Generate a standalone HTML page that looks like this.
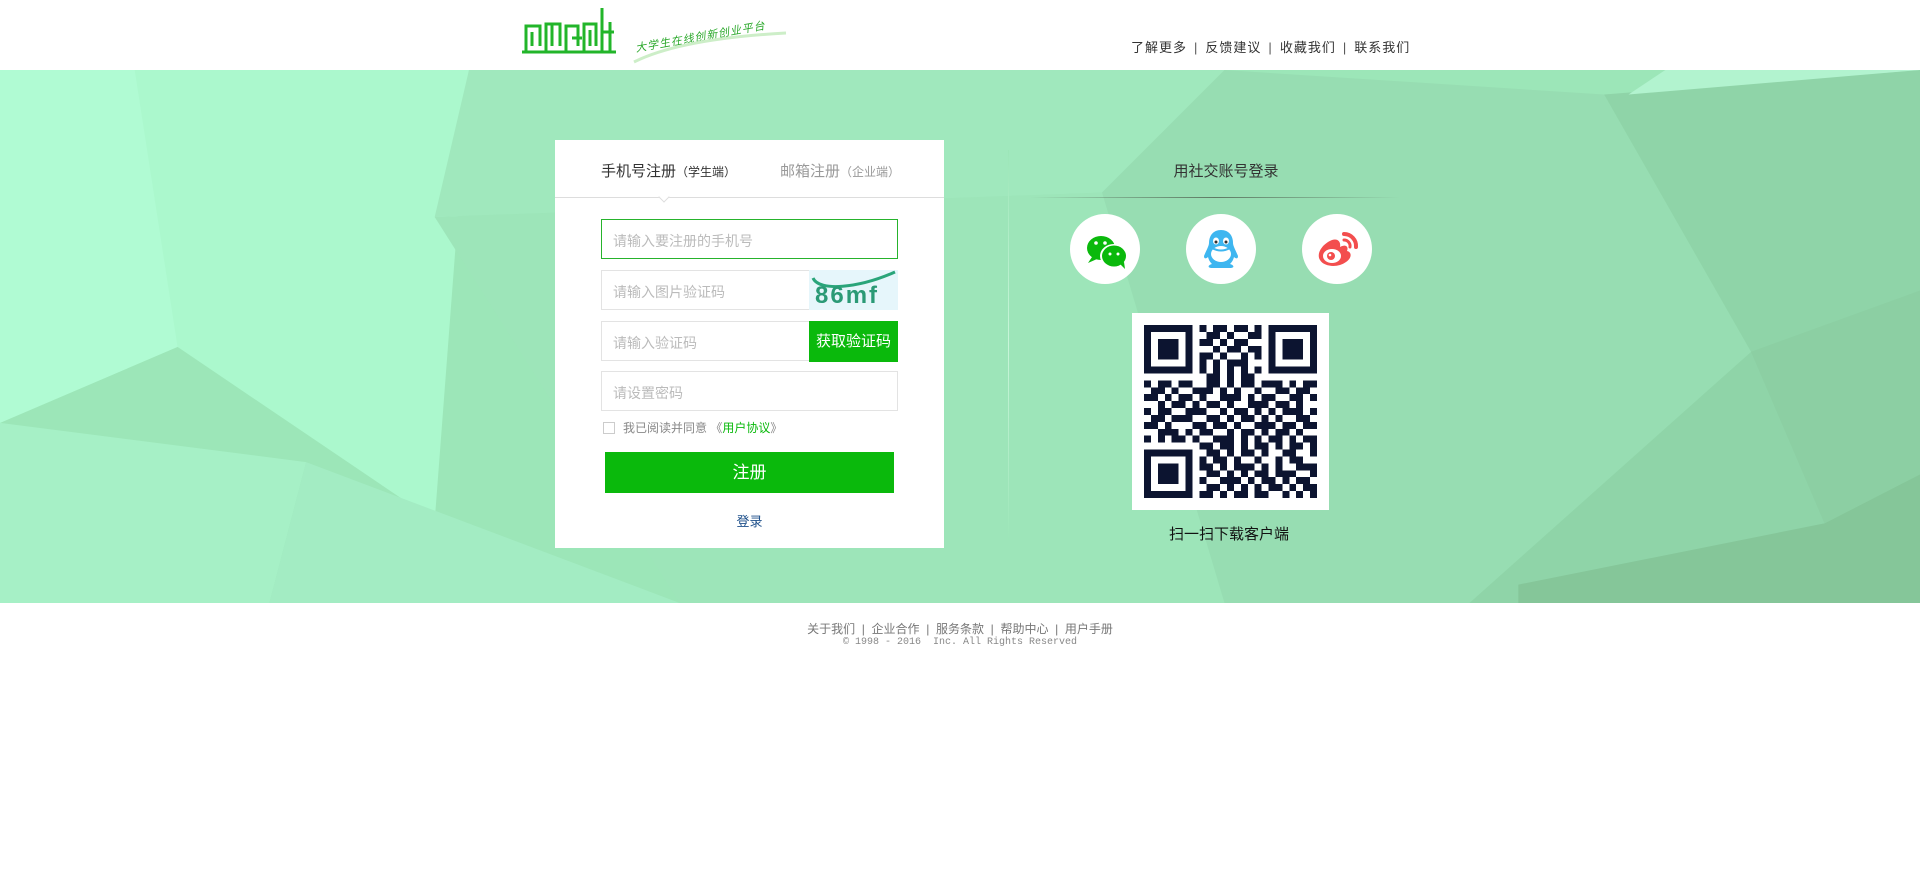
<!DOCTYPE html>
<html><head><meta charset="utf-8"><style>
*{margin:0;padding:0;box-sizing:border-box}
body{width:1920px;height:891px;background:#fff;font-family:"Liberation Sans","Noto Sans CJK SC",sans-serif;position:relative;overflow:hidden}
.abs{position:absolute}
.nav{left:1131px;top:37px;font-size:13px;color:#333;letter-spacing:1px}
.nav span{margin:0 7px;color:#555}
.band{left:0;top:70px;width:1920px;height:533px;background:#9ce6b8}
.card{left:555px;top:140px;width:389px;height:408px;background:#fff}
.tab{position:absolute;top:20px;font-size:15px}
.inp{position:absolute;left:46px;width:297px;height:40px;border:1px solid #e3e3e3;font-size:14px;color:#bbb;padding:11px 0 0 11px;background:#fff}
.foot{left:0;width:1920px;text-align:center;color:#777}
</style></head><body>
<div class="abs" style="left:520px;top:8px;width:98px;height:44px;">
<svg width="98" height="46" viewBox="0 0 98 46"><g fill="none" stroke="#22b52a" stroke-width="3">
<path d="M2 44h94M6 44V18h14v20M12 38V24M26 44V16h14v22M32 16v22M46 44V18h12v20M52 30h10M64 44V16h12v22M70 38V22M82 44V0M82 24h12M90 14v30"/></g></svg></div>
<div class="abs" style="left:634px;top:40px;font-size:11px;color:#2aa82a;font-style:italic;transform:rotate(-10deg);transform-origin:left top;letter-spacing:1px">大学生在线创新创业平台</div>
<svg class="abs" style="left:630px;top:30px" width="160" height="34"><path d="M4 32C40 14 100 6 156 3" stroke="#cdeec8" stroke-width="3" fill="none"/></svg>
<div class="abs nav">了解更多<span>|</span>反馈建议<span>|</span>收藏我们<span>|</span>联系我们</div>

<div class="abs band">
<svg width="1920" height="533" viewBox="0 0 1568 435" preserveAspectRatio="none">
<polygon points="0,0 383,0 355,368 145,226 0,288" fill="#abf8cd"/>
<polygon points="0,0 110,0 145,226 0,288" fill="#b0fbd3"/>
<polygon points="383,0 1000,0 900,100 355,120" fill="#a0e8bd"/>
<polygon points="355,120 900,100 1000,435 555,435" fill="#9de5b9"/>
<polygon points="0,288 250,320 220,435 0,435" fill="#a6f0c6"/>
<polygon points="250,320 555,435 220,435" fill="#a3ecc3"/>
<polygon points="1000,0 1310,20 1430,230 1200,435 1000,435 900,100" fill="#97ddb2"/>
<polygon points="1310,20 1568,0 1568,435 1200,435 1430,230" fill="#8fd4a8"/>
<polygon points="1330,20 1360,0 1568,0" fill="#b2f3cf"/>
<polygon points="1240,420 1490,370 1568,330 1568,435 1240,435" fill="#85c699"/>
<polygon points="1430,230 1568,180 1568,330 1490,370" fill="#8ccfa3"/>
</svg>
</div>

<div class="abs card">
<div class="tab" style="left:46px;top:20px;color:#333">手机号注册<span style="font-size:12px">（学生端）</span></div>
<div class="tab" style="left:225px;top:20px;color:#999">邮箱注册<span style="font-size:12px">（企业端）</span></div>
<div style="position:absolute;left:0;top:57px;width:389px;height:1px;background:#ddd"></div>
<div style="position:absolute;left:105px;top:53px;width:8px;height:8px;border-right:1px solid #ddd;border-bottom:1px solid #ddd;background:#fff;transform:rotate(45deg)"></div>
<div class="inp" style="top:79px;border-color:#26b32c">请输入要注册的手机号</div>
<div class="inp" style="top:130px">请输入图片验证码</div>
<div style="position:absolute;left:254px;top:130px;width:89px;height:40px;background:#e6f6fb;overflow:hidden">
<svg width="89" height="40"><path d="M4 8C10 22 50 18 86 2" stroke="#2aa57a" stroke-width="3" fill="none"/><text x="6" y="33" font-family="Liberation Sans" font-weight="bold" font-size="24" fill="#2b9a76" letter-spacing="2">86mf</text></svg></div>
<div class="inp" style="top:181px">请输入验证码</div>
<div style="position:absolute;left:254px;top:181px;width:89px;height:41px;background:#0ab90c;color:#fff;font-size:15px;text-align:center;line-height:41px">获取验证码</div>
<div class="inp" style="top:231px">请设置密码</div>
<div style="position:absolute;left:48px;top:282px;width:12px;height:12px;border:1px solid #ccc"></div>
<div style="position:absolute;left:68px;top:279px;font-size:12px;color:#888">我已阅读并同意 《<span style="color:#0ab90c">用户协议</span>》</div>
<div style="position:absolute;left:50px;top:312px;width:289px;height:41px;background:#0ab90c;color:#fff;font-size:17px;text-align:center;line-height:41px">注册</div>
<div style="position:absolute;left:0;width:389px;top:371px;text-align:center;font-size:13px;color:#1d4f8a">登录</div>
</div>

<div class="abs" style="left:1008px;top:150px;width:1px;height:390px;background:linear-gradient(#9ce6b8,#c8f5d9,#9ce6b8)"></div>
<div class="abs" style="left:1126px;top:160px;width:200px;text-align:center;font-size:15px;color:#333">用社交账号登录</div>
<div class="abs" style="left:1030px;top:197px;width:370px;height:1px;background:linear-gradient(90deg,rgba(80,100,80,0),#5f7a64,rgba(80,100,80,0))"></div>
<div class="abs" style="left:1070px;top:214px;width:70px;height:70px;border-radius:50%;background:#fff">
<svg width="70" height="70"><ellipse cx="31" cy="34" rx="14" ry="12" fill="#0ab90c"/><path d="M22 43l-4 6 9-4z" fill="#0ab90c"/><ellipse cx="44" cy="42" rx="14" ry="12" fill="#fff"/><ellipse cx="44" cy="42" rx="12" ry="10.5" fill="#0ab90c"/><path d="M50 50l5 5-1-7z" fill="#0ab90c"/><circle cx="26" cy="29" r="1.8" fill="#fff"/><circle cx="35" cy="29" r="1.8" fill="#fff"/><circle cx="40" cy="40" r="1.5" fill="#fff"/><circle cx="48" cy="40" r="1.5" fill="#fff"/></svg></div>
<div class="abs" style="left:1186px;top:214px;width:70px;height:70px;border-radius:50%;background:#fff">
<svg width="70" height="70"><path d="M35 16c-8 0-12 6-12 13 0 3-3 8-5 13 0 3 2 3 4 1 1 4 3 6 4 7-4 1-5 4 0 4h18c5 0 4-3 0-4 1-1 3-3 4-7 2 2 4 2 4-1-2-5-5-10-5-13 0-7-4-13-12-13z" fill="#3eb6f0"/><ellipse cx="35" cy="40" rx="10" ry="8" fill="#fff"/><ellipse cx="30" cy="27" rx="3" ry="3.5" fill="#fff"/><ellipse cx="40" cy="27" rx="3" ry="3.5" fill="#fff"/><circle cx="30" cy="28" r="1.5" fill="#333"/><circle cx="40" cy="28" r="1.5" fill="#333"/><path d="M26 34q9 5 18 0" stroke="#3eb6f0" stroke-width="2" fill="none"/></svg></div>
<div class="abs" style="left:1302px;top:214px;width:70px;height:70px;border-radius:50%;background:#fff">
<svg width="70" height="70"><path d="M30 26c-10 4-16 14-12 20 4 7 18 8 26 2 6-4 6-10 1-11 2-5-2-7-7-4 1-5-2-9-8-7z" fill="#f34e4e"/><ellipse cx="30" cy="42" rx="9" ry="7" fill="#fff"/><circle cx="29" cy="42" r="4" fill="#f34e4e"/><circle cx="28" cy="41" r="1.3" fill="#fff"/><path d="M42 20a12 12 0 0 1 12 13" stroke="#f34e4e" stroke-width="4" fill="none" stroke-linecap="round"/><path d="M42 26a6 6 0 0 1 6 7" stroke="#f34e4e" stroke-width="3" fill="none" stroke-linecap="round"/></svg></div>
<div class="abs" style="left:1132px;top:313px;width:197px;height:197px;background:#fff">
<svg style="position:absolute;left:12px;top:12px" width="173" height="173" viewBox="0 0 25 25" shape-rendering="crispEdges"><g fill="#0c1430">
<path fill-rule="evenodd" d="M0 0h7v7h-7zM1 1v5h5v-5zM18 0h7v7h-7zM19 1v5h5v-5zM0 18h7v7h-7zM1 19v5h5v-5z"/>
<path d="M2 2h3v3h-3zM20 2h3v3h-3zM2 20h3v3h-3z"/>
<path d="M8 0h1v1h-1zM10 0h2v1h-2zM13 0h2v1h-2zM16 0h1v1h-1zM9 1h2v1h-2zM12 1h1v1h-1zM15 1h2v1h-2zM8 2h2v1h-2zM11 2h1v1h-1zM13 2h2v1h-2zM10 3h1v1h-1zM12 3h2v1h-2zM15 3h2v1h-2zM8 4h2v1h-2zM11 4h1v1h-1zM14 4h1v1h-1zM16 4h1v1h-1zM8 5h1v1h-1zM10 5h1v1h-1zM12 5h3v1h-3zM8 6h1v1h-1zM10 6h1v1h-1zM12 6h1v1h-1zM14 6h1v1h-1zM16 6h1v1h-1zM9 7h2v1h-2zM12 7h1v1h-1zM14 7h2v1h-2z
M0 8h1v1h-1zM2 8h2v1h-2zM5 8h2v1h-2zM9 8h2v1h-2zM12 8h1v1h-1zM14 8h2v1h-2zM17 8h3v1h-3zM21 8h1v1h-1zM23 8h2v1h-2z
M1 9h2v1h-2zM4 9h1v1h-1zM7 9h3v1h-3zM11 9h1v1h-1zM13 9h1v1h-1zM16 9h1v1h-1zM19 9h2v1h-2zM22 9h2v1h-2z
M0 10h2v1h-2zM3 10h1v1h-1zM5 10h2v1h-2zM8 10h1v1h-1zM11 10h3v1h-3zM15 10h1v1h-1zM17 10h2v1h-2zM21 10h2v1h-2zM24 10h1v1h-1z
M2 11h1v1h-1zM4 11h2v1h-2zM7 11h1v1h-1zM9 11h2v1h-2zM12 11h1v1h-1zM15 11h3v1h-3zM19 11h2v1h-2zM22 11h1v1h-1z
M0 12h1v1h-1zM2 12h2v1h-2zM6 12h3v1h-3zM11 12h1v1h-1zM13 12h2v1h-2zM16 12h1v1h-1zM18 12h1v1h-1zM20 12h3v1h-3zM24 12h1v1h-1z
M1 13h2v1h-2zM4 13h3v1h-3zM9 13h2v1h-2zM12 13h1v1h-1zM14 13h2v1h-2zM17 13h1v1h-1zM19 13h1v1h-1zM22 13h2v1h-2z
M0 14h2v1h-2zM3 14h1v1h-1zM7 14h2v1h-2zM10 14h2v1h-2zM13 14h1v1h-1zM16 14h3v1h-3zM20 14h2v1h-2zM23 14h2v1h-2z
M2 15h3v1h-3zM6 15h1v1h-1zM8 15h2v1h-2zM12 15h1v1h-1zM14 15h2v1h-2zM17 15h1v1h-1zM19 15h2v1h-2zM22 15h1v1h-1z
M0 16h1v1h-1zM2 16h1v1h-1zM4 16h2v1h-2zM7 16h1v1h-1zM10 16h3v1h-3zM14 16h1v1h-1zM16 16h1v1h-1zM18 16h2v1h-2zM21 16h1v1h-1zM23 16h2v1h-2z
M8 17h2v1h-2zM11 17h2v1h-2zM14 17h1v1h-1zM16 17h2v1h-2zM19 17h1v1h-1zM21 17h2v1h-2zM24 17h1v1h-1z
M9 18h2v1h-2zM12 18h1v1h-1zM14 18h2v1h-2zM17 18h1v1h-1zM8 19h1v1h-1zM10 19h2v1h-2zM13 19h1v1h-1zM16 19h1v1h-1z
M8 20h2v1h-2zM11 20h1v1h-1zM13 20h3v1h-3zM17 20h1v1h-1zM19 20h1v1h-1zM22 20h3v1h-3z
M9 21h2v1h-2zM12 21h1v1h-1zM14 21h1v1h-1zM16 21h2v1h-2zM19 21h3v1h-3zM24 21h1v1h-1z
M8 22h1v1h-1zM11 22h3v1h-3zM15 22h1v1h-1zM17 22h2v1h-2zM20 22h1v1h-1zM22 22h2v1h-2z
M9 23h2v1h-2zM12 23h1v1h-1zM14 23h1v1h-1zM16 23h1v1h-1zM18 23h2v1h-2zM21 23h1v1h-1zM23 23h2v1h-2z
M8 24h2v1h-2zM11 24h1v1h-1zM13 24h2v1h-2zM16 24h2v1h-2zM20 24h1v1h-1zM22 24h1v1h-1zM24 24h1v1h-1z
M19 19h1v1h-1zM21 19h2v1h-2zM20 18h2v1h-2zM24 18h1v1h-1z"/></g></svg></div>
<div class="abs" style="left:1126px;top:523px;width:206px;text-align:center;font-size:15px;color:#111">扫一扫下载客户端</div>

<div class="abs foot" style="top:620px;font-size:12px">关于我们 &nbsp;|&nbsp; 企业合作 &nbsp;|&nbsp; 服务条款 &nbsp;|&nbsp; 帮助中心 &nbsp;|&nbsp; 用户手册</div>
<div class="abs foot" style="top:637px;font-size:10px;font-family:'Liberation Mono',monospace;color:#888">© 1998 - 2016 &nbsp;Inc. All Rights Reserved</div>
</body></html>
